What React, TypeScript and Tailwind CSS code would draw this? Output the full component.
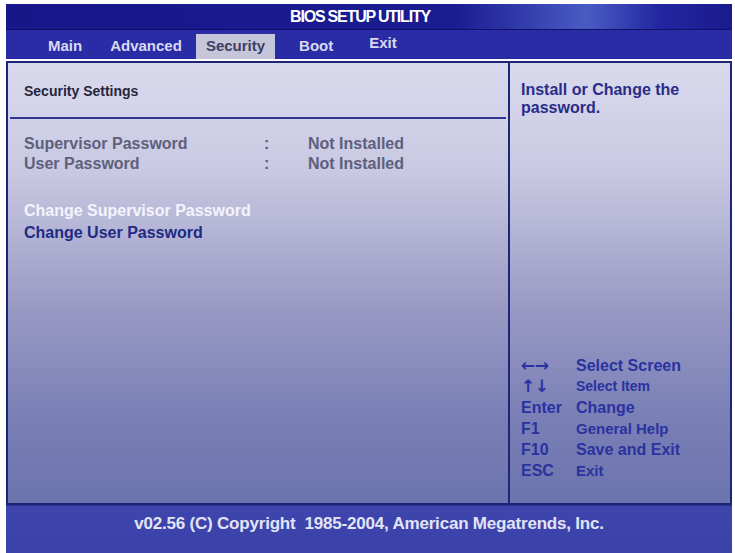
const tabs = ["Main", "Advanced", "Security", "Boot", "Exit"];

const keys: [string, string, string][] = [
  ["\u2190\u2192", "Select Screen", "text-[16px]"],
  ["\u2191\u2193", "Select Item", "text-[14px]"],
  ["Enter", "Change", "text-[16px]"],
  ["F1", "General Help", "text-[15px]"],
  ["F10", "Save and Exit", "text-[16px]"],
  ["ESC", "Exit", "text-[15px]"],
];

export default function App() {
  return (
    <div
      className="w-[735px] h-[553px] bg-white pl-[6px] pt-[4px] pr-[3px] overflow-hidden"
      style={{ fontFamily: '"Liberation Sans Narrow", "Liberation Sans", Arial, sans-serif' }}
    >
      <div className="flex h-full flex-col">
        {/* title */}
        <div className="flex h-[25px] items-center justify-center pr-[18px] bg-[linear-gradient(90deg,#17178a_0%,#1a1c92_62%,#4a5cc4_80%,#2226a0_90%,#1a1a8c_100%)]">
          <span className="text-[16px] font-bold tracking-[-1.2px] text-white">BIOS SETUP UTILITY</span>
        </div>

        {/* tabs */}
        <div className="flex h-[30px] items-end bg-[#2a2ca6] pl-[28px] border-t border-[#10106a]">
          {tabs.map((t) => (
            <div
              key={t}
              className={
                t === "Security"
                  ? "flex h-[25px] items-center bg-[#c6c6da] px-[10px] text-[15px] font-bold text-[#3c3e62]"
                  : t === "Exit"
                  ? "flex h-[25px] items-center self-start pt-[2px] px-[14px] text-[15px] font-bold text-[#d8daf2]"
                  : "flex h-[25px] items-center px-[14px] text-[15px] font-bold text-[#d8daf2]"
              }
            >
              {t === "Boot" ? <span className="pl-[10px] pr-[8px]">{t}</span> : t}
            </div>
          ))}
        </div>

        {/* body */}
        <div className="mt-[2px] grid flex-1 grid-cols-[502px_1fr] border-2 border-[#1e2478] bg-[linear-gradient(180deg,#dadaee_0%,#c8c8e2_25%,#9a9ac4_55%,#7a80b6_80%,#6c74ae_100%)]">
          <div className="flex flex-col border-r-2 border-[#1e2478] px-[2px]">
            <div className="pl-[14px] pt-[18px] pb-[15px] text-[14px] font-bold text-[#26263a]">Security Settings</div>
            <div className="h-[2px] bg-[#303490]" />
            <div className="pl-[14px] pt-[15px] text-[16px] font-bold leading-[20px] text-[#5e607c]">
              <div className="grid grid-cols-[240px_44px_1fr]">
                <span>Supervisor Password</span>
                <span>:</span>
                <span>Not Installed</span>
                <span>User Password</span>
                <span>:</span>
                <span>Not Installed</span>
              </div>
            </div>
            <div className="pl-[14px] pt-[26px] text-[16px] font-bold leading-[22px]">
              <div className="text-[#f4f4fc]">Change Supervisor Password</div>
              <div className="text-[#1e2a84]">Change User Password</div>
            </div>
          </div>

          <div className="flex flex-col justify-between pl-[11px] pb-[22px]">
            <div className="pt-[18px] text-[16px] font-bold leading-[18px] text-[#2a2c88]">
              Install or Change the
              <br />
              password.
            </div>
            <div className="grid grid-cols-[55px_1fr] items-center font-bold leading-[21px] text-[#2a32a0]">
              {keys.map(([k, d, size]) => (
                <div key={k} className="contents">
                  {k.length === 2 && k !== "F1" ? (
                    <span
                      className="text-[17px] leading-[21px] tracking-[-0.5px]"
                      style={{ fontFamily: '"DejaVu Sans", sans-serif' }}
                    >
                      {k}
                    </span>
                  ) : (
                    <span className="text-[16px]">{k}</span>
                  )}
                  <span className={size}>{d}</span>
                </div>
              ))}
            </div>
          </div>
        </div>

        {/* footer */}
        <div className="flex h-[48px] items-start justify-center border-t border-[#2a2e8c] bg-[linear-gradient(180deg,#3e46ae_0%,#3a42aa_100%)] pt-[5px]">
          <span className="text-[17px] font-bold tracking-[-0.2px] text-[#e2e4f6]">v02.56 (C) Copyright&nbsp;&nbsp;1985-2004, American Megatrends, Inc.</span>
        </div>
      </div>
    </div>
  );
}
